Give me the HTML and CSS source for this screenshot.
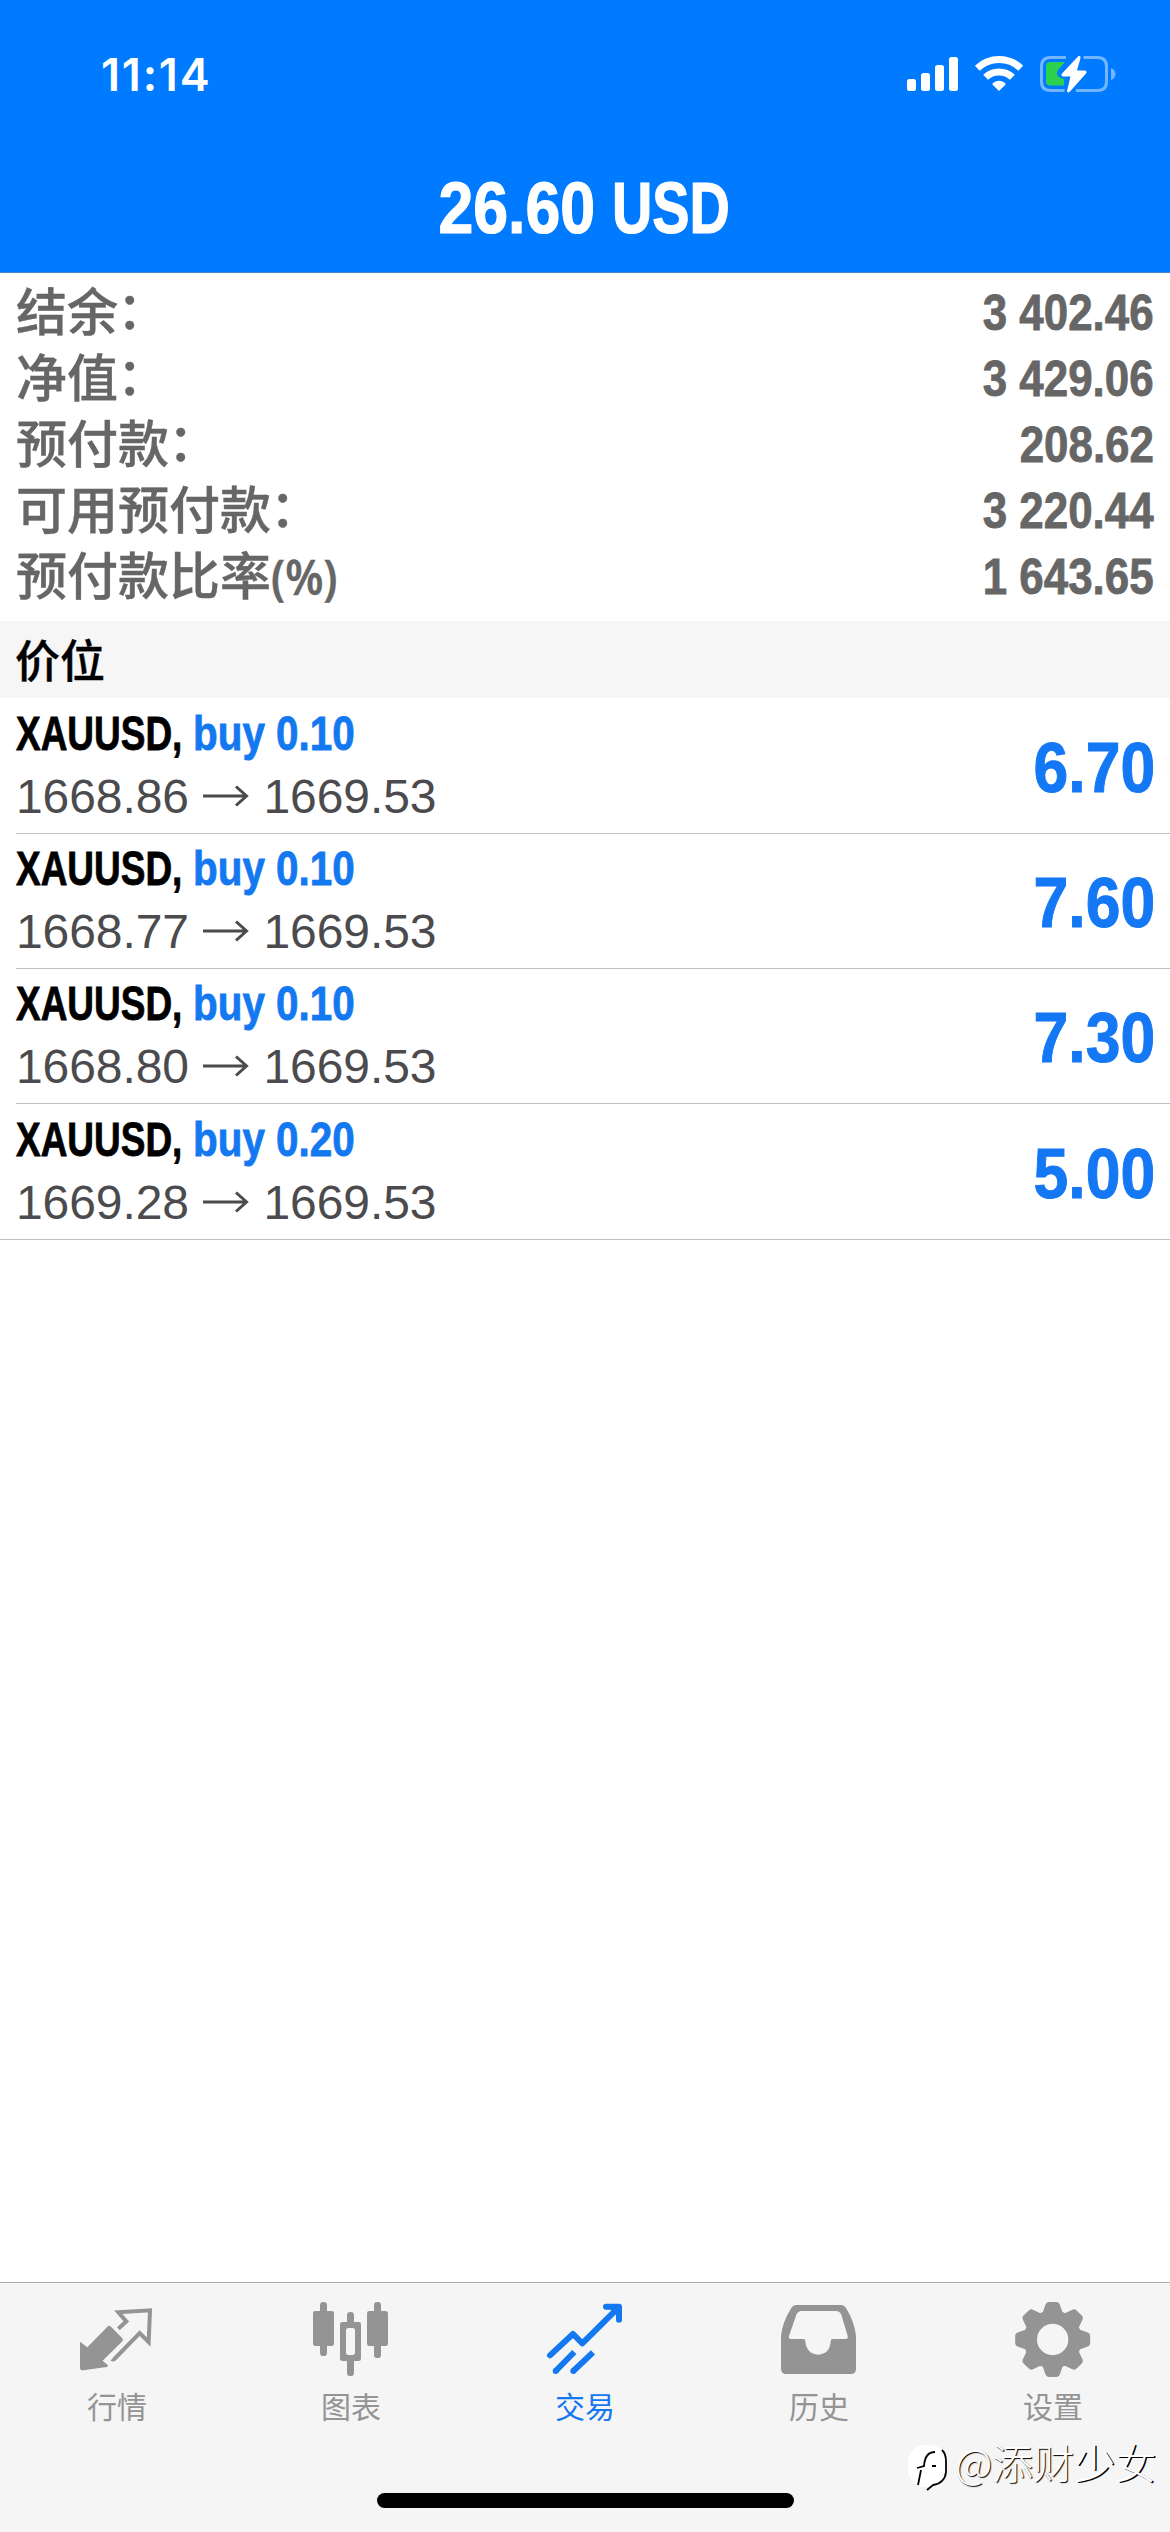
FILE: index.html
```html
<!DOCTYPE html>
<html lang="zh-CN">
<head>
<meta charset="utf-8">
<title>交易</title>
<link rel="stylesheet" href="styles.css">
</head>
<body>
<div class="screen">
  <header class="header">
    <div class="status">
      <span class="time">11:14</span>
      <svg class="status-icons" viewBox="900 50 220 46" width="220" height="46">
        <g fill="#fff">
          <rect x="907" y="79" width="9" height="12" rx="2.5"/>
          <rect x="921" y="73" width="9" height="18" rx="2.5"/>
          <rect x="935" y="65" width="9" height="26" rx="2.5"/>
          <rect x="949" y="57" width="9" height="34" rx="2.5"/>
          <path d="M999 91l-6.300-6.200q-.8-1 .3-1.800q6-4.400 12 0q1.100.8.300 1.800z"/>
        </g>
        <g fill="none" stroke="#fff" stroke-width="7">
          <path d="M977.300 68.200a31.500 31.500 0 0 1 43.400 0"/>
          <path d="M985.600 77.300a19.300 19.300 0 0 1 26.800 0"/>
        </g>
        <g fill="none" stroke="#73b6ff" stroke-width="3">
          <path d="M1066 57.500h-15.500q-9 0-9 9v15q0 9 9 9h14"/>
          <path d="M1083.500 57.500h14q9 0 9 9v15q0 9-9 9h-21.500"/>
        </g>
        <path fill="#73b6ff" d="M1111 68q4.500 2 4.500 6t-4.500 6z"/>
        <path fill="#2bd14f" d="M1065 62l-7 8q-3 6 3 8l3 1v6.500h-14q-4 0-4-4v-15.500q0-4 4-4z"/>
        <path fill="#fff" d="M1078.500 56q2.500-.5 2 2l-3.500 12.500h8q2.500.5 1 3l-16 18q-2.500 2-3-.5l3.500-14.500h-7.500q-2.500-.5-1-3z"/>
      </svg>
    </div>
    <h1 class="title"><span class="amount">26.60</span><span class="currency">USD</span></h1>
  </header>

  <section class="summary">
    <div class="line"><span>结余<i class="colon">：</i></span><b>3 402.46</b></div>
    <div class="line"><span>净值<i class="colon">：</i></span><b>3 429.06</b></div>
    <div class="line"><span>预付款<i class="colon">：</i></span><b>208.62</b></div>
    <div class="line"><span>可用预付款<i class="colon">：</i></span><b>3 220.44</b></div>
    <div class="line"><span>预付款比率<em class="pct">(%)</em></span><b>1 643.65</b></div>
  </section>

  <h2 class="section-title">价位</h2>

  <main class="positions">
    <article class="position">
      <div class="deal">
        <div class="order"><b class="symbol">XAUUSD,</b><b class="side">buy 0.10</b></div>
        <div class="prices">1668.86 <svg class="arrow" viewBox="0 0 48 24" width="48" height="24"><path d="M1 12h44M34 2.500l10.500 9.500L34 21.500"/></svg> 1669.53</div>
      </div>
      <b class="profit">6.70</b>
    </article>
    <article class="position">
      <div class="deal">
        <div class="order"><b class="symbol">XAUUSD,</b><b class="side">buy 0.10</b></div>
        <div class="prices">1668.77 <svg class="arrow" viewBox="0 0 48 24" width="48" height="24"><path d="M1 12h44M34 2.500l10.500 9.500L34 21.500"/></svg> 1669.53</div>
      </div>
      <b class="profit">7.60</b>
    </article>
    <article class="position">
      <div class="deal">
        <div class="order"><b class="symbol">XAUUSD,</b><b class="side">buy 0.10</b></div>
        <div class="prices">1668.80 <svg class="arrow" viewBox="0 0 48 24" width="48" height="24"><path d="M1 12h44M34 2.500l10.500 9.500L34 21.500"/></svg> 1669.53</div>
      </div>
      <b class="profit">7.30</b>
    </article>
    <article class="position">
      <div class="deal">
        <div class="order"><b class="symbol">XAUUSD,</b><b class="side">buy 0.20</b></div>
        <div class="prices">1669.28 <svg class="arrow" viewBox="0 0 48 24" width="48" height="24"><path d="M1 12h44M34 2.500l10.500 9.500L34 21.500"/></svg> 1669.53</div>
      </div>
      <b class="profit">5.00</b>
    </article>
  </main>

  <nav class="tabbar">
    <a class="tab">
      <svg class="tab-icon" viewBox="231 90 240 240">
        <path fill="currentColor" d="M240 215l22 17 60-62q6-5 11 0l34 35q4 5 0 9l-59 58 15 13q3 5-3 6l-70 10q-10 1-10-7z"/>
        <path fill="none" stroke="currentColor" stroke-width="12" d="M355 176l24-22-24-27 95-6-4 95-27-27-75 77q-5 4-8 1"/>
      </svg>
      <span>行情</span>
    </a>
    <a class="tab">
      <svg class="tab-icon" viewBox="933 90 240 240" fill="currentColor">
        <rect x="960" y="96" width="21" height="162" rx="10"/>
        <rect x="939" y="123" width="63" height="105" rx="7"/>
        <rect x="1122" y="96" width="21" height="168" rx="10"/>
        <rect x="1101" y="123" width="63" height="105" rx="7"/>
        <rect x="1041" y="126" width="21" height="42" rx="10"/>
        <rect x="1041" y="262" width="21" height="56" rx="10"/>
        <path fill-rule="evenodd" d="M1027 156h49q7 0 7 7v103q0 7-7 7h-49q-7 0-7-7V163q0-7 7-7zM1045 174q-7 0-7 7v67q0 7 7 7h13q7 0 7-7v-67q0-7-7-7z"/>
      </svg>
      <span>图表</span>
    </a>
    <a class="tab active">
      <svg class="tab-icon" viewBox="375 90 240 240" fill="none" stroke="currentColor" stroke-width="18" stroke-linecap="round" stroke-linejoin="round">
        <path d="M390 256l69-64 28 28 108-107M558 110h39v39"/>
        <path stroke-linecap="butt" d="M407 303l56-57M460 303l59-56"/>
        <path d="M407 303h.1M460 303h.1"/>
        <path fill="currentColor" stroke="none" d="M565 112h34v35z"/>
      </svg>
      <span>交易</span>
    </a>
    <a class="tab">
      <svg class="tab-icon" viewBox="117 90 240 240">
        <path fill="currentColor" fill-rule="evenodd" d="M168 105H304q9 0 14 9q26 42 30 84v98q0 16-16 16H139q-16 0-16-16v-98q4-42 31-84q5-9 14-9zM185 123q-11 0-16 11l-22 64q-2 9 6 9h37q6 0 6 7q4 39 38 40q36-1 38-40q0-7 6-7h39q8 0 6-9l-19-64q-5-11-16-11z"/>
      </svg>
      <span>历史</span>
    </a>
    <a class="tab">
      <svg class="tab-icon" viewBox="819 90 240 240">
        <defs><path id="tooth" d="M905 137l11-32q3-9 12-9h20q9 0 12 9l11 32z"/></defs>
        <g fill="currentColor">
          <use href="#tooth"/>
          <use href="#tooth" transform="rotate(45 938 208.500)"/>
          <use href="#tooth" transform="rotate(90 938 208.500)"/>
          <use href="#tooth" transform="rotate(135 938 208.500)"/>
          <use href="#tooth" transform="rotate(180 938 208.500)"/>
          <use href="#tooth" transform="rotate(225 938 208.500)"/>
          <use href="#tooth" transform="rotate(270 938 208.500)"/>
          <use href="#tooth" transform="rotate(315 938 208.500)"/>
        </g>
        <circle cx="938" cy="208.500" r="67" fill="none" stroke="currentColor" stroke-width="40"/>
      </svg>
      <span>设置</span>
    </a>
    <div class="home-indicator"></div>
    <div class="watermark">
      <svg class="mark" viewBox="0 0 50 52" width="50" height="52">
        <rect x="5" y="6" width="39" height="42" rx="17" fill="#fff"/>
        <path fill="none" stroke="#000" stroke-width="1.800" d="M14 29l7-2q1-14 11-14M18 31l-3 15M29 27h4M39 11q4 4 4 11v11q-1 11-13 13l-6 5"/>
      </svg>
      <span>@添财<span class="strong">少女</span></span>
    </div>
  </nav>
</div>
</body>
</html>
```
FILE: styles.css
```css
* { box-sizing: border-box; margin: 0; padding: 0; }

body {
  width: 1170px;
  height: 2532px;
  background: #fff;
  font-family: "Liberation Sans", "Noto Sans CJK SC", sans-serif;
}

.screen {
  width: 1170px;
  height: 2532px;
  display: flex;
  flex-direction: column;
  overflow: hidden;
}

.header {
  height: 273px;
  background: #007aff;
  border-bottom: 1px solid #4787cc;
  color: #fff;
}

.status {
  height: 146px;
  padding: 50px 50px 0 101px;
  display: flex;
  justify-content: space-between;
  align-items: flex-start;
}

.time {
  font: 600 45px/50px Inter, sans-serif;
  letter-spacing: 1.8px;
}

.title {
  display: flex;
  justify-content: center;
  gap: 17px;
  padding-left: 9px;
  font-size: 72px;
  line-height: 124px;
  -webkit-text-stroke: 1.2px;
}

.amount { transform: scaleX(.87); transform-origin: right; }
.currency { transform: scaleX(.775); transform-origin: left; }

.summary {
  height: 348px;
  padding: 7px 16px 0;
  color: #666;
}

.line {
  height: 66px;
  display: flex;
  justify-content: space-between;
  font-size: 51px;
  line-height: 66px;
}

.line > span {
  height: 58px;
  line-height: 58px;
  font-family: "Noto Sans CJK SC", sans-serif;
  font-weight: 500;
  -webkit-text-stroke: .4px;
}

.line b {
  font-size: 50px;
  font-weight: 700;
  transform: scaleX(.878);
  transform-origin: right;
  -webkit-text-stroke: .8px;
}

.colon { font-style: normal; position: relative; left: -1px; top: -2px; }

.pct {
  display: inline-block;
  font: 600 48px/58px "Noto Sans", sans-serif;
  transform: scaleX(.91);
  transform-origin: left;
}

.section-title {
  height: 77px;
  padding-left: 15px;
  background: #f6f6f6;
  font: 500 45px/75px "Noto Sans CJK SC", sans-serif;
  -webkit-text-stroke: .4px;
  color: #000;
}

.positions { padding-top: 1px; flex: 1; }

.position {
  height: 135px;
  margin-left: 16px;
  padding-right: 15px;
  border-bottom: 1px solid #c0c0c3;
  display: flex;
  justify-content: space-between;
  align-items: center;
}

.position:last-child {
  height: 136px;
  margin-left: 0;
  padding-left: 16px;
}

.order {
  height: 62px;
  display: flex;
  font-size: 48px;
  line-height: 60px;
  white-space: nowrap;
  -webkit-text-stroke: .8px;
}

.symbol { width: 177px; transform: scaleX(.77); transform-origin: left; }
.side { color: #1478f0; transform: scaleX(.842); transform-origin: left; }

.prices {
  height: 62px;
  font-size: 48px;
  line-height: 62px;
  letter-spacing: -.08px;
  color: #4b4b4d;
  white-space: pre;
}

.arrow { fill: none; stroke: #4b4b4d; stroke-width: 3; vertical-align: 5px; }

.profit {
  padding-top: 3px;
  font-size: 71px;
  color: #1478f5;
  transform: scaleX(.88);
  transform-origin: right;
  -webkit-text-stroke: 1px;
}

.tabbar {
  position: relative;
  height: 250px;
  padding-top: 17px;
  background: #f5f5f5;
  border-top: 1px solid #adadad;
  display: grid;
  grid-template-columns: repeat(5, 1fr);
}

.tab {
  display: flex;
  flex-direction: column;
  align-items: center;
  color: #949494;
  font: 400 30px/40px "Noto Sans CJK SC", sans-serif;
}

.tab span { margin-top: 5px; }
.tab.active { color: #1478f0; }
.tab-icon { width: 80px; height: 80px; }

.home-indicator {
  position: absolute;
  left: 377px;
  top: 210px;
  width: 417px;
  height: 15px;
  border-radius: 8px;
  background: #000;
}

.watermark {
  position: absolute;
  left: 903px;
  top: 156px;
  display: flex;
  align-items: center;
  font: 300 41px/46px "Noto Sans CJK SC", sans-serif;
  color: #fff;
  text-shadow: 1px 1px 1px #000;
  white-space: nowrap;
}

.watermark > span { margin: -9px 0 0 2px; }
.strong { text-shadow: 1.5px 1px 0 #000; }
```
